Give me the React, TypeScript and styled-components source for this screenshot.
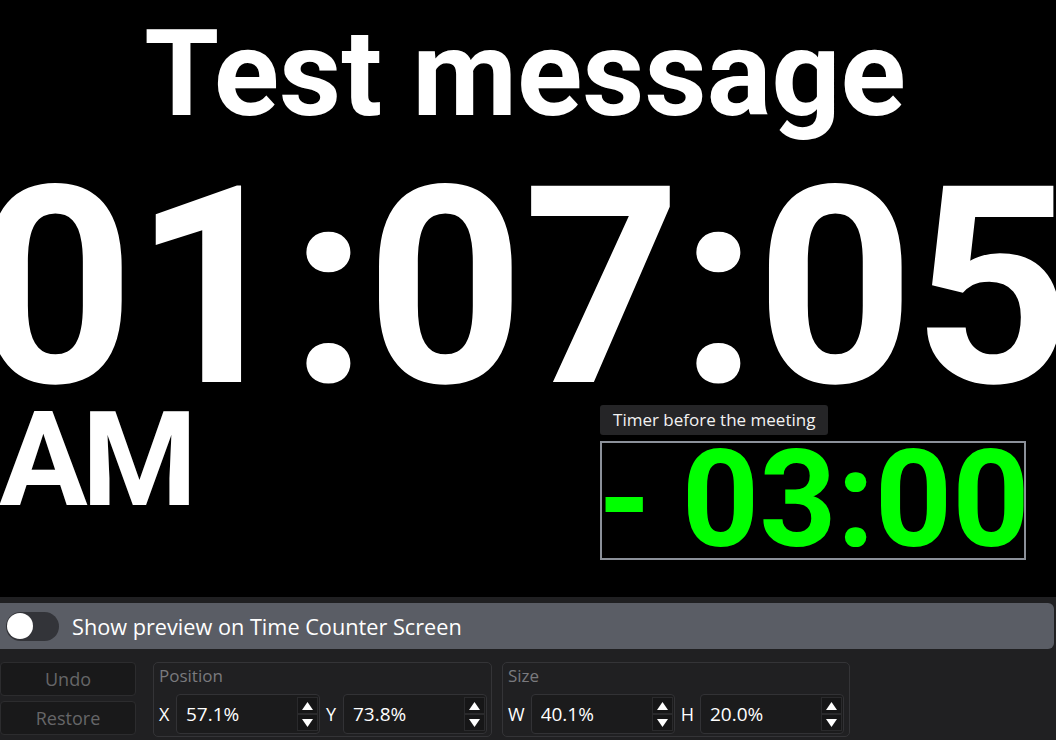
import styled, { createGlobalStyle } from "styled-components"

const GlobalStyle = createGlobalStyle`
    html, body {
        margin: 0;
        padding: 0;
        background: #000;
        overflow: hidden;
    }
    * {
        box-sizing: border-box;
    }
`

const uiFont = `"Open Sans", "Noto Sans", "Liberation Sans", sans-serif`
const displayFont = `Roboto, "Liberation Sans", sans-serif`

const Page = styled.div`
    width: 1056px;
    height: 740px;
    display: flex;
    flex-direction: column;
    background: #000;
    font-family: ${uiFont};
`

// preview of the time counter screen
const Canvas = styled.div`
    position: relative;
    height: 597px;
    overflow: hidden;
    background: #000;
    color: #fff;
    font-family: ${displayFont};
    font-weight: 700;
`

const Message = styled.div`
    text-align: center;
    font-size: 121px;
    line-height: 149px;
    white-space: nowrap;
    padding-right: 6px;
`

const Clock = styled.div`
    display: flex;
    justify-content: center;
    padding-right: 10px;
    font-size: 276px;
    line-height: 277px;
    letter-spacing: -1.5px;
    white-space: nowrap;
`

const Meridiem = styled.div`
    font-size: 132px;
    line-height: 68px;
    letter-spacing: -6px;
    margin-left: -1px;
`

const TimerFrame = styled.div<{ $x: number; $y: number; $w: number; $h: number }>`
    position: absolute;
    left: ${({ $x }) => $x}%;
    top: ${({ $y }) => $y}%;
    width: ${({ $w }) => $w}%;
    height: ${({ $h }) => $h}%;
    border: 2px solid #8b9099;
    display: flex;
    align-items: center;
`

const TimerLabel = styled.span`
    position: absolute;
    left: -2px;
    bottom: calc(100% + 8px);
    height: 30px;
    padding: 0 13px;
    border-radius: 3px;
    background: #252527;
    color: #f2f2f2;
    font-family: ${uiFont};
    font-weight: 400;
    font-size: 17px;
    line-height: 30px;
    white-space: nowrap;
`

const TimerValue = styled.span`
    margin-left: -4px;
    color: #00ff00;
    font-size: 135px;
    line-height: 1;
    word-spacing: -3px;
    white-space: nowrap;
`

// editor panel
const Panel = styled.div`
    flex: 1;
    background: #202022;
    padding-top: 6px;
`

const PreviewBar = styled.div`
    height: 46px;
    margin-right: 2px;
    padding-left: 6px;
    display: flex;
    align-items: center;
    gap: 13px;
    background: #5a5d65;
    border-radius: 0 6px 6px 0;
`

const Switch = styled.div<{ $on?: boolean }>`
    width: 53px;
    height: 29px;
    padding: 0 1px;
    border-radius: 15px;
    background: #333439;
    display: flex;
    align-items: center;
    justify-content: ${({ $on }) => ($on ? "flex-end" : "flex-start")};
`

const Knob = styled.span`
    width: 26px;
    height: 26px;
    border-radius: 50%;
    background: #fff;
`

const SwitchLabel = styled.span`
    color: #fff;
    font-size: 21.7px;
`

const Controls = styled.div`
    display: flex;
    align-items: flex-start;
    margin-top: 13px;
`

const ButtonStack = styled.div`
    width: 136px;
    display: flex;
    flex-direction: column;
    gap: 5px;
    margin-right: 17px;
`

const ActionButton = styled.button`
    height: 34px;
    padding: 0;
    border: 1px solid #2c2c2e;
    border-radius: 4px;
    background: #19191a;
    color: #666668;
    font-family: ${uiFont};
    font-size: 18px;
    cursor: default;
`

const FieldGroup = styled.fieldset<{ $width: number }>`
    width: ${({ $width }) => $width}px;
    height: 75px;
    margin: 0 10px 0 0;
    padding: 2px 5px 2px 5px;
    border: 1px solid #343437;
    border-radius: 5px;
    display: flex;
    flex-direction: column;
    gap: 7px;
    min-width: 0;
`

const GroupTitle = styled.div`
    color: #7a7a7e;
    font-size: 17px;
    line-height: 22px;
`

const FieldRow = styled.div`
    display: flex;
    align-items: center;
    gap: 6px;
`

const AxisLabel = styled.span`
    color: #fff;
    font-size: 18px;
    min-width: 11px;
`

const NumberField = styled.div`
    width: 144px;
    height: 40px;
    padding: 0 1px 0 9px;
    border: 1px solid #323235;
    border-radius: 4px;
    background: #1b1b1c;
    display: flex;
    align-items: center;
`

const ValueInput = styled.input`
    flex: 1;
    min-width: 0;
    padding: 0;
    border: none;
    outline: none;
    background: transparent;
    color: #fff;
    font-family: ${uiFont};
    font-size: 19px;
`

const Spinner = styled.div`
    width: 21px;
    height: 34px;
    display: flex;
    flex-direction: column;
`

const SpinButton = styled.span`
    flex: 1;
    display: flex;
    align-items: center;
    justify-content: center;
    background: #161617;
    border: 1px solid #2a2a2c;
    color: #fff;
`

const Arrow = ({ up }: { up?: boolean }) => (
    <svg width="11" height="8" viewBox="0 0 11 8">
        <path d={up ? "M5.5 0 L11 8 L0 8 Z" : "M0 0 L11 0 L5.5 8 Z"} fill="currentColor" />
    </svg>
)

const Field = ({ label, value }: { label: string; value: string }) => (
    <>
        <AxisLabel>{label}</AxisLabel>
        <NumberField>
            <ValueInput value={value} readOnly />
            <Spinner>
                <SpinButton><Arrow up /></SpinButton>
                <SpinButton><Arrow /></SpinButton>
            </Spinner>
        </NumberField>
    </>
)

export default function App() {
    return (
        <Page>
            <GlobalStyle />
            <Canvas>
                <Message>Test message</Message>
                <Clock>01:07:05</Clock>
                <Meridiem>AM</Meridiem>
                <TimerFrame $x={56.82} $y={73.9} $w={40.34} $h={19.95}>
                    <TimerLabel>Timer before the meeting</TimerLabel>
                    <TimerValue>- 03:00</TimerValue>
                </TimerFrame>
            </Canvas>
            <Panel>
                <PreviewBar>
                    <Switch>
                        <Knob />
                    </Switch>
                    <SwitchLabel>Show preview on Time Counter Screen</SwitchLabel>
                </PreviewBar>
                <Controls>
                    <ButtonStack>
                        <ActionButton>Undo</ActionButton>
                        <ActionButton>Restore</ActionButton>
                    </ButtonStack>
                    <FieldGroup $width={339}>
                        <GroupTitle>Position</GroupTitle>
                        <FieldRow>
                            <Field label="X" value="57.1%" />
                            <Field label="Y" value="73.8%" />
                        </FieldRow>
                    </FieldGroup>
                    <FieldGroup $width={348}>
                        <GroupTitle>Size</GroupTitle>
                        <FieldRow>
                            <Field label="W" value="40.1%" />
                            <Field label="H" value="20.0%" />
                        </FieldRow>
                    </FieldGroup>
                </Controls>
            </Panel>
        </Page>
    )
}
